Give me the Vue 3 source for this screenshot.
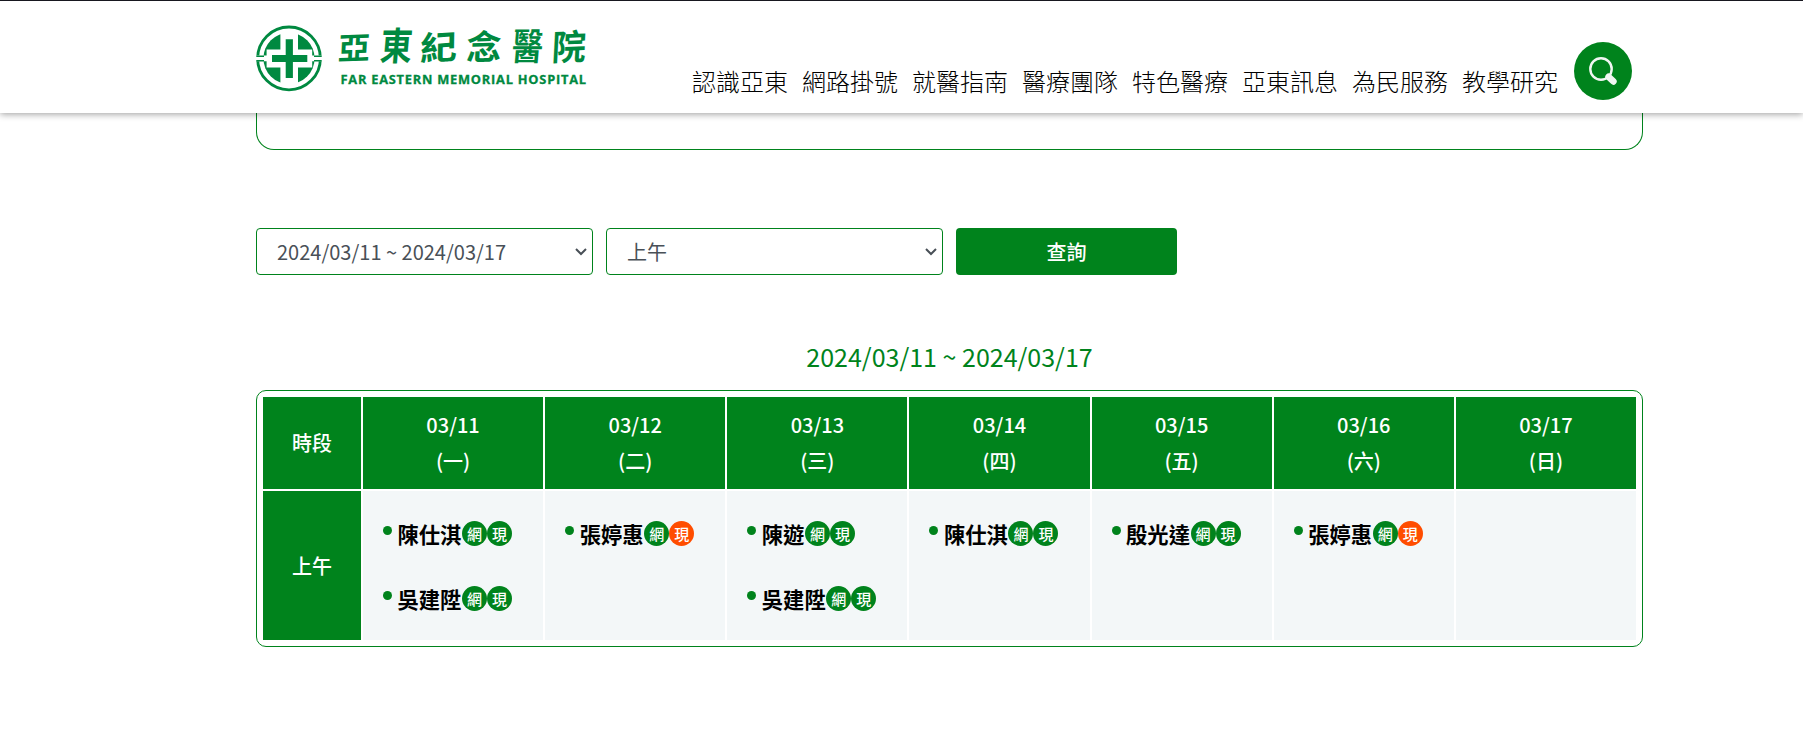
<script setup>
const navItems = ['認識亞東', '網路掛號', '就醫指南', '醫療團隊', '特色醫療', '亞東訊息', '為民服務', '教學研究']

const days = [
  { date: '03/11', week: '(一)', doctors: [{ name: '陳仕淇' }, { name: '吳建陞' }] },
  { date: '03/12', week: '(二)', doctors: [{ name: '張婷惠', full: true }] },
  { date: '03/13', week: '(三)', doctors: [{ name: '陳遊' }, { name: '吳建陞' }] },
  { date: '03/14', week: '(四)', doctors: [{ name: '陳仕淇' }] },
  { date: '03/15', week: '(五)', doctors: [{ name: '殷光達' }] },
  { date: '03/16', week: '(六)', doctors: [{ name: '張婷惠', full: true }] },
  { date: '03/17', week: '(日)', doctors: [] },
]

// Centre, width and height of each character of the wordmark
const logoChars = [
  { c: '亞', x: 354, y: 48.5, w: 30, h: 29, r: -2 },
  { c: '東', x: 396.5, y: 46.5, w: 30, h: 36, r: 0 },
  { c: '紀', x: 438.5, y: 48, w: 35, h: 31, r: -4 },
  { c: '念', x: 484, y: 47.5, w: 33, h: 32, r: -2 },
  { c: '醫', x: 527.5, y: 47, w: 29, h: 35, r: 0 },
  { c: '院', x: 569, y: 47.5, w: 32, h: 33, r: -2 },
].map((g) => ({
  c: g.c,
  t: `translate(${g.x - 256} ${g.y - 22}) rotate(${g.r}) skewX(-5) scale(${g.w / 31} ${g.h / 31})`,
}))
</script>

<template>
  <div class="page">
    <header class="header">
      <div class="container bar">
        <svg class="logo" width="340" height="76" viewBox="0 0 340 76">
          <circle cx="33" cy="36.4" r="31.4" fill="none" stroke="#008940" stroke-width="2.8" />
          <circle cx="33" cy="36.4" r="25.6" fill="#008940" />
          <path d="M24.4 8H42V27.4H56.2V45.4H42V65H24.4V45.4H10.6V27.4H24.4Z" fill="#fff" />
          <path d="M0 33.6H11V39.2H0ZM55 33.6H67V39.2H55Z" fill="#fff" />
          <path d="M.3 34.2H8M58 34.2H65.7M.3 38.8H8M58 38.8H65.7" stroke="#008940" stroke-width="1.5" />
          <path d="M29.7 17.2H36.9V33H51.3V40H36.9V56H29.7V40H16V33H29.7Z" fill="#008940" />
          <text v-for="g in logoChars" :key="g.c" class="logo-zh" :transform="g.t" y="11.6">{{ g.c }}</text>
          <text class="logo-en" x="84.5" y="62" textLength="245.5">FAR EASTERN MEMORIAL HOSPITAL</text>
        </svg>
        <nav class="nav">
          <a v-for="n in navItems" :key="n">{{ n }}</a>
        </nav>
        <button class="search" aria-label="search">
          <svg width="58" height="58" viewBox="0 0 58 58">
            <circle cx="27" cy="27" r="10.7" fill="none" stroke="#f1f6f2" stroke-width="2.4" />
            <path d="M34.6 34.8L39.4 39.4" stroke="#f1f6f2" stroke-width="6.6" stroke-linecap="round" />
          </svg>
        </button>
      </div>
    </header>

    <main class="container">
      <div class="panel"></div>

      <div class="filters">
        <div class="select">
          <span>2024/03/11 ~ 2024/03/17</span>
          <svg width="12" height="8" viewBox="0 0 12 8"><path d="M1 1L6 6L11 1" /></svg>
        </div>
        <div class="select">
          <span>上午</span>
          <svg width="12" height="8" viewBox="0 0 12 8"><path d="M1 1L6 6L11 1" /></svg>
        </div>
        <button class="query">查詢</button>
      </div>

      <h2 class="title">2024/03/11 ~ 2024/03/17</h2>

      <section class="table">
        <div class="th">時段</div>
        <div v-for="d in days" :key="d.date" class="th">
          <span>{{ d.date }}</span><span>{{ d.week }}</span>
        </div>
        <div class="th">上午</div>
        <ul v-for="d in days" :key="d.week" class="td">
          <li v-for="p in d.doctors" :key="p.name">
            <i class="dot"></i>
            <span class="name">{{ p.name }}</span>
            <span class="badge">網</span>
            <span class="badge" :class="{ full: p.full }">現</span>
          </li>
        </ul>
      </section>
    </main>
  </div>
</template>

<style>
body {
  margin: 0;
  background: #fff;
  overflow: hidden;
}
</style>

<style scoped>
.page {
  height: 742px;
  overflow: hidden;
  font-family: "Noto Sans CJK TC", sans-serif;
}
.container {
  width: 1387px;
  margin-left: 256px;
}
.header {
  position: relative;
  z-index: 1;
  box-sizing: border-box;
  height: 113px;
  border-top: 1px solid #17171f;
  background: #fff;
  box-shadow: 0 1px 7px rgba(0, 0, 0, 0.4);
}
.bar {
  display: flex;
  align-items: flex-start;
}
.logo {
  display: block;
  margin-top: 21px;
  overflow: visible;
}
.logo-zh {
  font-size: 33px;
  font-weight: 700;
  text-anchor: middle;
  fill: #008940;
}
.logo-en {
  font: 700 12.8px "Open Sans", sans-serif;
  fill: #008940;
  stroke: #008940;
  stroke-width: 0.3;
}
.nav {
  display: flex;
  gap: 14px;
  margin: 62px 0 0 96px;
  font-size: 24px;
  font-weight: 300;
  line-height: 36px;
  color: #000;
  white-space: nowrap;
}
.search {
  width: 58px;
  height: 58px;
  margin: 41px 0 0 16px;
  padding: 0;
  border: 0;
  border-radius: 50%;
  background: #00831c;
}
.search svg {
  display: block;
}
.panel {
  box-sizing: border-box;
  height: 37px;
  border: 1px solid #00831c;
  border-top: 0;
  border-radius: 0 0 18px 18px;
}
.filters {
  display: flex;
  gap: 13px;
  margin-top: 78px;
}
.select {
  box-sizing: border-box;
  display: flex;
  align-items: center;
  justify-content: space-between;
  width: 337px;
  height: 47px;
  padding: 0 5px 0 20px;
  border: 1px solid #00831c;
  border-radius: 4px;
  font-size: 20px;
  color: #495057;
}
.select svg {
  fill: none;
  stroke: #495057;
  stroke-width: 2;
}
.query {
  width: 221px;
  height: 47px;
  padding: 0 0 1px;
  border: 0;
  border-radius: 4px;
  background: #00831c;
  color: #fff;
  font: 500 20px "Noto Sans CJK TC", sans-serif;
}
.title {
  margin: 61px 0 13px;
  font-size: 25px;
  font-weight: 400;
  line-height: 41px;
  text-align: center;
  color: #00831c;
}
.table {
  box-sizing: border-box;
  display: grid;
  grid-template-columns: 98px repeat(7, 1fr);
  grid-template-rows: 92px 149px;
  gap: 2px;
  height: 257px;
  padding: 6px;
  border: 1px solid #00831c;
  border-radius: 10px;
}
.th {
  display: flex;
  flex-direction: column;
  align-items: center;
  justify-content: center;
  background: #00831c;
  color: #fff;
  font-size: 20px;
  font-weight: 500;
  line-height: 36px;
}
.td {
  display: flex;
  flex-direction: column;
  gap: 40px;
  margin: 0;
  padding: 30px 0 0 20px;
  background: #f3f7f8;
  list-style: none;
}
.td li {
  display: flex;
  height: 25px;
}
.dot {
  width: 9px;
  height: 9px;
  margin: 5px 5.5px 0 0;
  border-radius: 50%;
  background: #00831c;
}
.name {
  margin-right: 0.6px;
  font-size: 21.3px;
  font-weight: 700;
  line-height: 26px;
  color: #000;
}
.badge {
  width: 25px;
  height: 25px;
  border-radius: 50%;
  background: #00831c;
  color: #fff;
  font-size: 15px;
  font-weight: 500;
  line-height: 26px;
  text-align: center;
}
.badge.full {
  background: #ff4d00;
}
</style>
